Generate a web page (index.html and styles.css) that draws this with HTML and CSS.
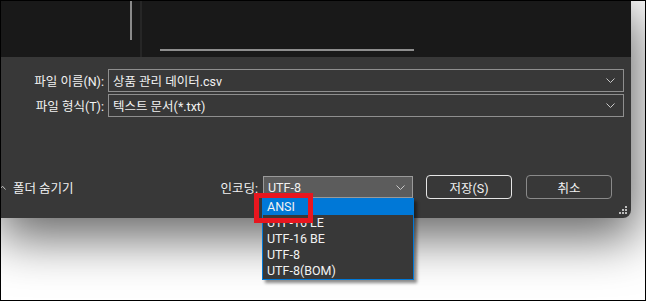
FILE: index.html
```html
<!DOCTYPE html>
<html lang="ko">
<head>
    <meta charset="UTF-8">
    <meta name="viewport" content="width=device-width, initial-scale=1.0">
    <title>다른 이름으로 저장</title>
    <link rel="stylesheet" href="styles.css">
</head>
<body>
    <div class="screen">
        <div class="dialog">
            <!-- file browser (scrolled down) -->
            <div class="browser">
                <div class="nav-pane"><span class="vthumb"></span></div>
                <div class="splitter"></div>
                <div class="file-pane"><span class="hthumb"></span></div>
            </div>

            <div class="fields">
                <label class="field-label">파일 이름(N):</label>
                <div class="combo">
                    <span class="combo-text">상품 관리 데이터.csv</span>
                    <svg class="chevron" width="9" height="5" viewBox="0 0 9 5"><path d="M0.5 0.5 L4.5 4.5 L8.5 0.5" fill="none" stroke="#c8c8c8" stroke-width="1"/></svg>
                </div>
                <label class="field-label">파일 형식(T):</label>
                <div class="combo">
                    <span class="combo-text">텍스트 문서(*.txt)</span>
                    <svg class="chevron" width="9" height="5" viewBox="0 0 9 5"><path d="M0.5 0.5 L4.5 4.5 L8.5 0.5" fill="none" stroke="#c8c8c8" stroke-width="1"/></svg>
                </div>
            </div>

            <div class="footer">
                <div class="toggle">
                    <svg class="caret" width="7" height="5" viewBox="0 0 7 5"><path d="M0.5 4.5 L3.5 1.2 L6.5 4.5" fill="none" stroke="#c0c0c0" stroke-width="1"/></svg>
                    <span>폴더 숨기기</span>
                </div>

                <div class="encoding">
                    <span class="field-label">인코딩:</span>
                    <div class="select">
                        <span class="combo-text">UTF-8</span>
                        <svg class="chevron" width="9" height="5" viewBox="0 0 9 5"><path d="M0.5 0.5 L4.5 4.5 L8.5 0.5" fill="none" stroke="#c8c8c8" stroke-width="1"/></svg>
                        <ul class="options">
                            <li class="selected">ANSI</li>
                            <li>UTF-16 LE</li>
                            <li>UTF-16 BE</li>
                            <li>UTF-8</li>
                            <li>UTF-8(BOM)</li>
                        </ul>
                        <span class="highlight-box"></span>
                    </div>
                </div>

                <button class="btn btn-default">저장(S)</button>
                <button class="btn">취소</button>

                <svg class="grip" width="9" height="9" viewBox="0 0 9 9">
                    <rect x="6" y="0" width="2" height="2" fill="#bdbdbd"/>
                    <rect x="3" y="3" width="2" height="2" fill="#bdbdbd"/>
                    <rect x="6" y="3" width="2" height="2" fill="#bdbdbd"/>
                    <rect x="0" y="6" width="2" height="2" fill="#bdbdbd"/>
                    <rect x="3" y="6" width="2" height="2" fill="#bdbdbd"/>
                    <rect x="6" y="6" width="2" height="2" fill="#bdbdbd"/>
                </svg>
            </div>
        </div>
    </div>
</body>
</html>
```

FILE: styles.css
```css
:root {
    --dialog: #383838;
    --pane: #191919;
    --border: #8f8f8f;
    --accent: #0078d7;
    --text: #f2f2f2;
}
* {
    box-sizing: border-box;
}
body {
    margin: 0;
    padding: 0;
    font-family: Roboto, "Noto Sans CJK KR", sans-serif;
    font-size: 12.5px;
    color: var(--text);
    background-color: #ffffff;
}
.screen {
    width: 646px;
    height: 301px;
    border: 1px solid #000;
    background-color: #ffffff;
    overflow: hidden;
}
.dialog {
    width: 630px;
    height: 217px;
    background-color: var(--dialog);
    border-bottom-right-radius: 8px;
    box-shadow: 2px 16px 50px 4px rgba(0,0,0,0.6);
    display: flex;
    flex-direction: column;
    position: relative;
}
.browser {
    height: 56px;
    background-color: var(--pane);
    display: flex;
}
.nav-pane {
    width: 139px;
    display: flex;
    justify-content: flex-end;
    padding-right: 8px;
}
.vthumb {
    width: 2px;
    height: 39px;
    background-color: #8a8a8a;
}
.splitter {
    width: 2px;
    background-color: #262626;
}
.file-pane {
    flex: 1;
    padding: 48px 0 0 18px;
}
.hthumb {
    display: block;
    width: 254px;
    height: 2px;
    background-color: #8e8e8e;
}
.fields {
    display: grid;
    grid-template-columns: 103px 516px;
    column-gap: 4px;
    row-gap: 2px;
    margin-top: 12px;
}
.field-label {
    text-align: right;
    align-self: center;
    white-space: nowrap;
    color: var(--text);
}
.combo {
    height: 23px;
    border: 1px solid var(--border);
    background-color: var(--dialog);
    display: flex;
    align-items: center;
    padding: 0 8px 0 4px;
}
.combo-text {
    flex: 1;
    white-space: nowrap;
}
.chevron {
    flex: none;
}
.footer {
    display: flex;
    align-items: center;
    height: 24px;
    margin-top: 58px;
    padding-right: 19px;
    position: relative;
}
.toggle {
    display: flex;
    align-items: center;
    gap: 7px;
    margin-left: -2px;
}
.encoding {
    margin-left: auto;
    display: flex;
    align-items: center;
    gap: 5px;
}
.select {
    position: relative;
    width: 150px;
    height: 22px;
    align-self: flex-start;
    border: 1px solid #9a9a9a;
    background-color: #5c5c5c;
    display: flex;
    align-items: center;
    padding: 0 7px 0 4px;
}
.options {
    position: absolute;
    top: 21px;
    left: -2px;
    width: 152px;
    margin: 0;
    padding: 0;
    list-style: none;
    background-color: #383838;
    border: 1px solid var(--accent);
    border-top: none;
    box-shadow: 3px 3px 3px rgba(0,0,0,0.45);
}
.options li {
    height: 16px;
    line-height: 16px;
    padding-left: 4px;
    white-space: nowrap;
}
.options li.selected {
    background-color: var(--accent);
    height: 17px;
    line-height: 17px;
}
.highlight-box {
    position: absolute;
    left: -10px;
    top: 16px;
    width: 59px;
    height: 30px;
    border: 5px solid #e8161f;
}
.btn {
    width: 86px;
    height: 24px;
    margin-left: 13px;
    border: 1px solid #8a8a8a;
    border-radius: 4px;
    background-color: var(--dialog);
    color: var(--text);
    font-family: inherit;
    font-size: 12.5px;
    padding: 0;
}
.btn-default {
    border-color: #e6e6e6;
}
.btn + .btn {
    margin-left: 14px;
}
.grip {
    position: absolute;
    right: 3px;
    bottom: -16px;
}
```
